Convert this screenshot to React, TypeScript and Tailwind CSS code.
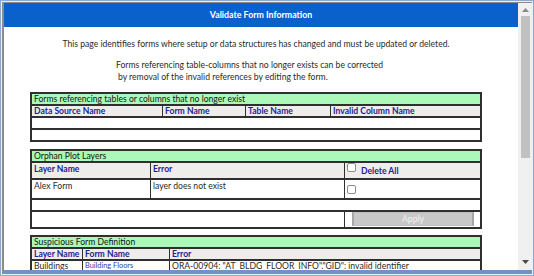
function Check() {
  return <span className="inline-block w-[9px] h-[9px] shrink-0 border border-[#8a8a8a] rounded-[2px] bg-white" />;
}

const line = "border-[#2f2f2f]";
const tbl = "ml-[26px] w-[452px] border-x-2 border-t-2 " + line;
const row = "flex border-b-2 " + line;
const cell = "border-r " + line + " px-[2px] flex items-center overflow-hidden whitespace-nowrap";
const last = "flex-1 px-[2px] flex items-center overflow-hidden whitespace-nowrap";
const head = "bg-[#efedeb] text-[#22228e] font-bold";

function Title({ children }: { children: React.ReactNode }) {
  return (
    <div className={row + " h-[12px] bg-[#abf8b8] px-[2px] items-center text-[#151515]"}>
      {children}
    </div>
  );
}

function Scrollbar() {
  return (
    <div className="w-[14px] bg-[#f0f0f0] flex flex-col items-center">
      <div className="h-[12px] flex items-center justify-center pt-[2px]">
        <svg width="7" height="4" viewBox="0 0 7 4"><path d="M0 4 L3.5 0 L7 4 Z" fill="#8a8a8a" /></svg>
      </div>
      <div className="w-[9px] h-[142px] bg-[#c1c1c1] mt-px" />
      <div className="flex-1" />
      <div className="h-[10px] flex items-start justify-center">
        <svg width="7" height="4" viewBox="0 0 7 4"><path d="M0 0 L3.5 4 L7 0 Z" fill="#4a4a4a" /></svg>
      </div>
    </div>
  );
}

export default function App() {
  return (
    <div className="w-[534px] h-[276px] border border-[#8ea9d1] bg-[#e9eef5] p-px font-['Lato','Liberation_Sans',sans-serif] text-[8.6px] leading-[12px] text-[#2a2a2a] overflow-hidden">
      <div className="flex h-full border-l-2 border-t border-[#8c8c8c] border-b-4 border-b-[#7092c8] bg-white">
        <div className="flex-1 flex flex-col overflow-hidden">
          <div className="h-[24px] shrink-0 bg-[#0a61cb] flex items-center justify-center text-white font-bold text-[8.8px]">
            Validate Form Information
          </div>
          <div className="flex-1 overflow-hidden">
            <p className="mt-[11px] text-center pr-[10px]">
              This page identifies forms where setup or data structures has changed and must be updated or deleted.
            </p>
            <p className="mt-[9px] pl-[112px]">Forms referencing table-columns that no longer exists can be corrected</p>
            <p className="pl-[114px]">by removal of the invalid references by editing the form.</p>

            {/* forms referencing missing tables/columns */}
            <div className={tbl + " mt-[9px]"}>
              <Title>Forms referencing tables or columns that no longer exist</Title>
              <div className={row + " h-[12px] " + head}>
                <div className={cell + " w-[131px]"}>Data Source Name</div>
                <div className={cell + " w-[83px]"}>Form Name</div>
                <div className={cell + " w-[85px]"}>Table Name</div>
                <div className={last}>Invalid Column Name</div>
              </div>
              <div className={row + " h-[12px]"} />
              <div className={row + " h-[12px]"} />
            </div>

            {/* orphan plot layers */}
            <div className={tbl + " mt-[7px]"}>
              <Title>Orphan Plot Layers</Title>
              <div className={row + " h-[17px] " + head}>
                <div className={cell + " w-[119px] items-start"}>Layer Name</div>
                <div className={cell + " w-[194px] items-start"}>Error</div>
                <div className={last + " items-end gap-[5px] pb-[1px]"}>
                  <span className="mb-[2px]"><Check /></span>
                  <span className="leading-[11px]">Delete All</span>
                </div>
              </div>
              <div className={row + " h-[20px]"}>
                <div className={cell + " w-[119px] items-start"}>Alex Form</div>
                <div className={cell + " w-[194px] items-start"}>layer does not exist</div>
                <div className={last + " items-start pt-[5px]"}><Check /></div>
              </div>
              <div className={row + " h-[12px]"} />
              <div className={row + " h-[17px]"}>
                <div className={cell + " w-[313px]"} />
                <div className="flex-1 flex items-stretch pl-[7px] pr-[6px] pb-px">
                  <button className="w-full bg-[#c8c8c8] border-x-2 border-y border-x-[#a6a6a6] border-y-[#bdbdbd] text-[#f2f2f2] text-[8.6px] leading-[12px]">
                    Apply
                  </button>
                </div>
              </div>
            </div>

            {/* suspicious form definitions */}
            <div className={tbl + " mt-[6px]"}>
              <Title>Suspicious Form Definition</Title>
              <div className={row + " h-[12px] " + head}>
                <div className={cell + " w-[51px]"}>Layer Name</div>
                <div className={cell + " w-[87px]"}>Form Name</div>
                <div className={last}>Error</div>
              </div>
              <div className={row + " h-[12px]"}>
                <div className={cell + " w-[51px]"}>Buildings</div>
                <div className={cell + " w-[87px] text-[#2e3fa8] text-[7.4px]"}>Building Floors</div>
                <div className={last}>ORA-00904: "AT_BLDG_FLOOR_INFO"."GID": invalid identifier</div>
              </div>
              <div className={row + " h-[12px]"} />
            </div>
          </div>
        </div>
        <Scrollbar />
      </div>
    </div>
  );
}
